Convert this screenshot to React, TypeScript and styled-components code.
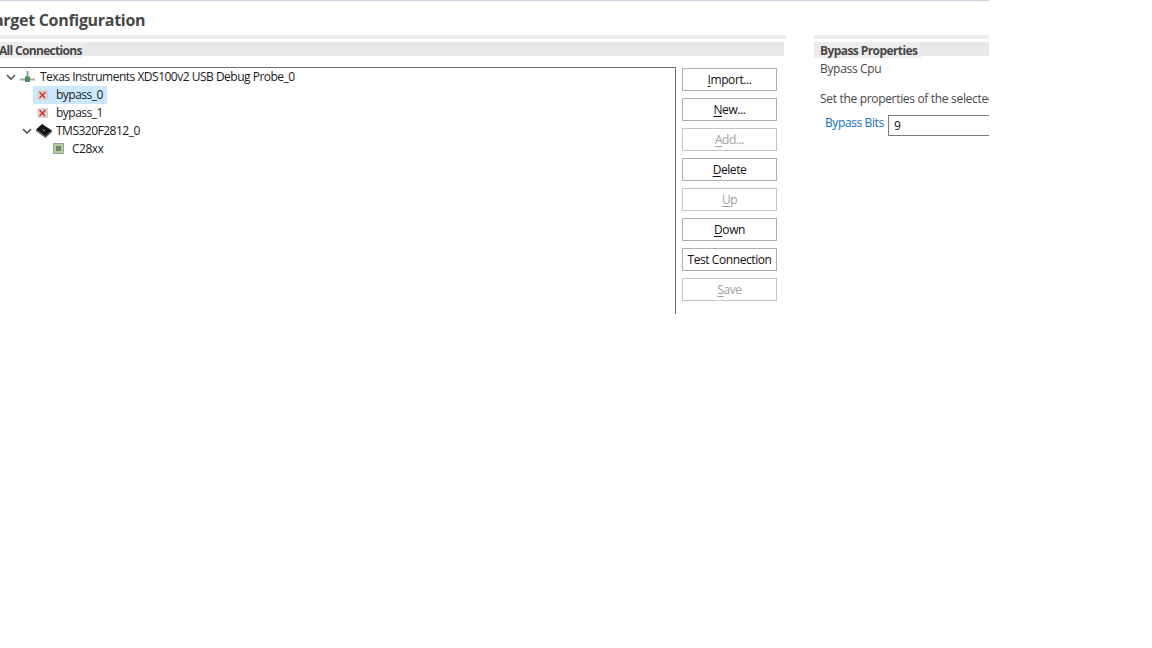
import React from "react";
import styled, { createGlobalStyle } from "styled-components";

const Global = createGlobalStyle`
  html, body { margin: 0; padding: 0; background: #fff; height: 100%; }
  body { font-family: "Open Sans", "Liberation Sans", sans-serif; font-size: 12px; color: #1f1f1f; }
`;

const Editor = styled.div`
  width: 989px;
  height: 648px;
  overflow: hidden;
  border-top: 1px solid #c9d0de;
  box-sizing: border-box;
`;
const Title = styled.h1`
  margin: 10px 0 0 -15px;
  height: 24px;
  line-height: 18px;
  font-size: 16px;
  font-weight: 700;
  color: #474747;
  white-space: nowrap;
  letter-spacing: -0.3px;
`;
const Columns = styled.div`
  display: flex;
  margin-left: -6px;
`;
const Left = styled.section`
  width: 792px;
  flex: none;
`;
const Right = styled.section`
  margin-left: 28px;
  width: 300px;
  flex: none;
`;
const SectionHead = styled.div`
  border-top: 4px solid #ececec;
  height: 22px;
`;
const HeadBar = styled.div`
  margin-top: 3px;
  height: 14px;
  background: #e8e8e8;
  margin-right: 2px;
`;
const HeadLabel = styled.div<{ $tight?: boolean }>`
  display: inline-block;
  height: 16px;
  background: #ececec;
  padding: ${p => (p.$tight ? "0 0 0 5px" : "0 4px 0 6px")};
  font-weight: 700;
  line-height: 18px;
  font-size: 12px;
  color: #474747;
  letter-spacing: ${p => (p.$tight ? "-0.68px" : "-0.58px")};
  white-space: nowrap;
`;
const Body = styled.div`
  display: flex;
  margin-top: 6px;
  height: 247px;
`;
const Tree = styled.div`
  width: 682px;
  flex: none;
  box-sizing: border-box;
  border-top: 1px solid #6d6d6d;
  border-right: 1px solid #6d6d6d;
  padding-left: 7px;
`;
const Row = styled.div<{ $depth: number }>`
  display: flex;
  align-items: center;
  height: 18px;
  padding-left: ${p => p.$depth * 16}px;
`;
const Twist = styled.span`
  width: 16px;
  height: 18px;
  flex: none;
  box-sizing: border-box;
  padding-left: 3px;
  display: flex;
  align-items: center;
  justify-content: center;
`;
const Item = styled.span<{ $sel?: boolean }>`
  display: flex;
  align-items: center;
  height: 18px;
  padding: 0 4px 0 3px;
  background: ${p => (p.$sel ? "#cce8ff" : "transparent")};
`;
const IconBox = styled.span`
  width: 16px;
  height: 16px;
  flex: none;
  margin-right: 4px;
  display: block;
`;
const Label = styled.span`
  font-size: 12px;
  line-height: 18px;
  color: #1a1a1a;
  letter-spacing: -0.5px;
  white-space: nowrap;
`;
const Buttons = styled.div`
  display: flex;
  flex-direction: column;
  gap: 7px;
  margin: 1px 0 0 6px;
`;
const Btn = styled.button`
  width: 95px;
  height: 23px;
  box-sizing: border-box;
  padding: 0;
  background: #fff;
  border: 1px solid #adadad;
  border-radius: 0;
  font-family: inherit;
  font-size: 12px;
  line-height: 20px;
  letter-spacing: -0.42px;
  color: #111;
  white-space: nowrap;
  &:disabled { color: #a0a0a0; border-color: #c4c4c4; }
  u { text-underline-offset: 2px; }
`;
const Para = styled.p`
  margin: 0;
  font-size: 12px;
  line-height: 16px;
  color: #474747;
  padding-left: 6px;
  letter-spacing: -0.32px;
  white-space: nowrap;
`;
const Spaced = styled(Para)`
  margin-top: 14px;
`;
const Field = styled.div`
  display: flex;
  align-items: flex-start;
  margin: 8px 0 0 11px;
`;
const FieldLabel = styled.span`
  color: #0f6fc6;
  font-size: 12px;
  line-height: 16px;
  letter-spacing: -0.4px;
  width: 63px;
  flex: none;
  white-space: nowrap;
`;
const Input = styled.div`
  width: 200px;
  height: 21px;
  box-sizing: border-box;
  border: 1px solid #7a7a7a;
  padding-left: 5px;
  font-size: 12px;
  line-height: 20px;
  color: #111;
`;

const Chevron = () => (
  <svg width="10" height="7" viewBox="0 0 10 7" fill="none" stroke="#555" strokeWidth="1.6">
    <path d="M1 1l4 4 4-4" />
  </svg>
);
const ProbeIcon = () => (
  <svg width="16" height="16" viewBox="0 0 16 16">
    <rect x="6.5" y="2" width="2" height="8" fill="#9a9a9a" />
    <rect x="0" y="9.5" width="15" height="2" fill="#a8a8a8" />
    <rect x="5.5" y="8" width="4" height="4.5" fill="#3da35a" stroke="#53735b" strokeWidth="0.8" />
  </svg>
);
const BypassIcon = () => (
  <svg width="16" height="16" viewBox="0 0 16 16">
    <rect x="1.5" y="3" width="10.5" height="10" fill="#d6d3d3" />
    <path d="M3.5 5l5.5 6M9.5 5l-6 6" stroke="#e2262b" strokeWidth="1.4" />
  </svg>
);
const ChipIcon = () => (
  <svg width="16" height="16" viewBox="0 0 16 16">
    <path d="M0 6.5 L6 1 L16 7.5 L9.5 13.5 Z" fill="#161616" />
    <path d="M0 6.5v1.5L9.5 15l6.5-6V7.5L9.5 13.5Z" fill="#5a5a5a" />
    <path d="M6.5 6.5l2.5 1.5" stroke="#9a9a9a" strokeWidth="1" />
  </svg>
);
const CoreIcon = () => (
  <svg width="16" height="16" viewBox="0 0 16 16">
    <rect x="1.5" y="2.5" width="10" height="10" fill="#a9cf8c" stroke="#8fa39a" />
    <rect x="4" y="5" width="5" height="5" fill="#6f7163" />
    <path d="M3 3.5v9M5 3.5v9M7 3.5v9M9 3.5v9M11 3.5v9" stroke="#d5e3c6" strokeWidth="0.5" opacity="0.55" />
  </svg>
);

const buttons: { pre: string; key: string; post: string; off?: boolean }[] = [
  { pre: "", key: "I", post: "mport..." },
  { pre: "", key: "N", post: "ew..." },
  { pre: "", key: "A", post: "dd...", off: true },
  { pre: "", key: "D", post: "elete" },
  { pre: "", key: "U", post: "p", off: true },
  { pre: "", key: "D", post: "own" },
  { pre: "Test Connection", key: "", post: "" },
  { pre: "", key: "S", post: "ave", off: true },
];

export default function App() {
  return (
    <>
      <Global />
      <Editor>
        <Title>Target Configuration</Title>
        <Columns>
          <Left>
            <SectionHead>
              <HeadBar><HeadLabel $tight>All Connections</HeadLabel></HeadBar>
            </SectionHead>
            <Body>
              <Tree>
                <Row $depth={0}>
                  <Twist><Chevron /></Twist>
                  <Item><IconBox><ProbeIcon /></IconBox><Label>Texas Instruments XDS100v2 USB Debug Probe_0</Label></Item>
                </Row>
                <Row $depth={1}>
                  <Twist />
                  <Item $sel><IconBox><BypassIcon /></IconBox><Label>bypass_0</Label></Item>
                </Row>
                <Row $depth={1}>
                  <Twist />
                  <Item><IconBox><BypassIcon /></IconBox><Label>bypass_1</Label></Item>
                </Row>
                <Row $depth={1}>
                  <Twist><Chevron /></Twist>
                  <Item><IconBox><ChipIcon /></IconBox><Label>TMS320F2812_0</Label></Item>
                </Row>
                <Row $depth={2}>
                  <Twist />
                  <Item><IconBox><CoreIcon /></IconBox><Label>C28xx</Label></Item>
                </Row>
              </Tree>
              <Buttons>
                {buttons.map((b, i) => (
                  <Btn key={i} disabled={b.off}>
                    {b.pre}
                    {b.key && <u>{b.key}</u>}
                    {b.post}
                  </Btn>
                ))}
              </Buttons>
            </Body>
          </Left>
          <Right>
            <SectionHead>
              <HeadBar><HeadLabel>Bypass Properties</HeadLabel></HeadBar>
            </SectionHead>
            <Para>Bypass Cpu</Para>
            <Spaced>Set the properties of the selected bypass</Spaced>
            <Field>
              <FieldLabel>Bypass Bits</FieldLabel>
              <Input>9</Input>
            </Field>
          </Right>
        </Columns>
      </Editor>
    </>
  );
}
